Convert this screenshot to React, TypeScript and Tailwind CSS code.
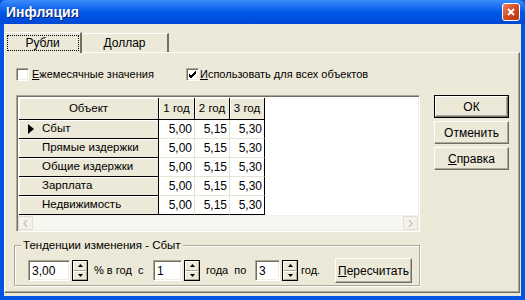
import React from 'react';

const raised =
  'bg-[#ece9d8] border border-t-white border-l-white border-r-[#716f64] border-b-[#716f64] shadow-[inset_-1px_-1px_0_#aca899]';
const sunken =
  'border border-t-[#aca899] border-l-[#aca899] border-r-white border-b-white shadow-[inset_1px_1px_0_#716f64,inset_-1px_-1px_0_#f1efe2]';

const rows = ['Сбыт', 'Прямые издержки', 'Общие издержки', 'Зарплата', 'Недвижимость'];
const values = ['5,00', '5,15', '5,30'];

const Check: React.FC<{ checked?: boolean }> = ({ checked }) => (
  <div className={`w-[13px] h-[13px] bg-white ${sunken} flex items-center justify-center`}>
    {checked && (
      <svg width="9" height="9" viewBox="0 0 9 9">
        <path d="M1 4 L3 6 L8 1 M1 5 L3 7 L8 2 M1 6 L3 8 L8 3" stroke="#000" strokeWidth="1" fill="none" />
      </svg>
    )}
  </div>
);

const Spin: React.FC = () => (
  <div className="w-[16px] h-[21px] border border-black flex flex-col bg-[#ece9d8]">
    <div className="flex-1 flex items-center justify-center border border-t-white border-l-white border-r-[#aca899] border-b-[#aca899]">
      <svg width="5" height="3" viewBox="0 0 5 3"><path d="M2.5 0 L5 3 L0 3 Z" fill="#000" /></svg>
    </div>
    <div className="flex-1 flex items-center justify-center border border-t-white border-l-white border-r-[#aca899] border-b-[#aca899]">
      <svg width="5" height="3" viewBox="0 0 5 3"><path d="M0 0 L5 0 L2.5 3 Z" fill="#000" /></svg>
    </div>
  </div>
);

const Edit: React.FC<{ value: string; w: string }> = ({ value, w }) => (
  <div className={`${w} h-[21px] bg-white ${sunken} flex items-center pl-[3px] text-[12px] leading-none`}>{value}</div>
);

const Btn: React.FC<{ children: React.ReactNode; def?: boolean; w?: string; h?: string }> = ({ children, def, w = 'w-[75px]', h = 'h-[23px]' }) =>
  def ? (
    <div className={`${w} ${h} border border-black flex`}>
      <div className={`flex-1 ${raised} flex items-center justify-center`}>{children}</div>
    </div>
  ) : (
    <div className={`${w} ${h} ${raised} flex items-center justify-center`}>{children}</div>
  );

export default function App() {
  return (
    <div className="w-[525px] h-[300px] flex flex-col font-['Liberation_Sans',Arial,sans-serif] text-[11px] text-black bg-[#0054e3] select-none">
      {/* title bar */}
      <div className="h-[24px] shrink-0 flex items-center justify-between pl-[6px] pr-[5px] rounded-t-[6px] bg-gradient-to-b from-[#3b8cf8] via-[#0058e8] to-[#0048d6]">
        <span className="text-white font-bold text-[14px] [text-shadow:1px_1px_0_#0a1e6e]">Инфляция</span>
        <div className="w-[18px] h-[18px] rounded-[3px] border border-white bg-gradient-to-br from-[#e9825f] via-[#d54a22] to-[#b8360f] flex items-center justify-center">
          <svg width="10" height="10" viewBox="0 0 10 10">
            <path d="M2 2 L8 8 M8 2 L2 8" stroke="#fff" strokeWidth="2" />
          </svg>
        </div>
      </div>

      <div className="flex-1 flex flex-col border-x-4 border-b-4 border-[#0054e3] bg-[#ece9d8]">
        {/* tabs */}
        <div className="mt-[7px] h-[21px] flex items-end">
          <div className="relative z-10 w-[78px] h-[21px] -mb-[1px] bg-[#ece9d8] border-t border-l border-white border-r-2 border-r-[#716f64] flex items-center justify-center pb-[1px]">
            <span className="absolute left-[2px] right-[1px] top-[2px] bottom-[2px] border border-dotted border-black" />
            <span className="text-[12px]">Рубли</span>
          </div>
          <div className="w-[87px] h-[19px] bg-[#ece9d8] border-t border-white border-r-2 border-r-[#716f64] flex items-center justify-center">
            <span className="text-[12px]">Доллар</span>
          </div>
        </div>

        {/* tab panel */}
        <div className="w-[516px] h-[241px] border border-t-white border-l-white border-r-[#716f64] border-b-[#716f64] shadow-[inset_-1px_-1px_0_#aca899] flex flex-col pl-[11px] pt-[15px]">
          <div className="h-[13px] flex items-center">
            <div className="w-[170px] flex items-center gap-[3px]">
              <Check />
              <span><span className="underline">Е</span>жемесячные значения</span>
            </div>
            <div className="flex items-center gap-[1px]">
              <Check checked />
              <span><span className="underline">И</span>спользовать для всех объектов</span>
            </div>
          </div>

          <div className="mt-[14px] flex">
            {/* grid */}
            <div className={`w-[404px] h-[137px] bg-white ${sunken} p-[1px] flex flex-col`}>
              <div className="flex-1 flex flex-col overflow-hidden pl-[1px] pt-[1px]">
                <div className="flex h-[23px] text-[11.5px]">
                  <div className="w-[140px] bg-[#ece9d8] border-r border-b border-black shadow-[inset_1px_1px_0_#fff] flex items-center justify-center">Объект</div>
                  {['1 год', '2 год', '3 год'].map((h, i) => (
                    <div key={h} className={`${i === 0 ? 'w-[36px]' : 'w-[35px]'} bg-[#ece9d8] border-r border-b border-black shadow-[inset_1px_1px_0_#fff] flex items-center justify-center`}>{h}</div>
                  ))}
                </div>
                {rows.map((r, ri) => (
                  <div key={r} className="flex h-[19px]">
                    <div className="w-[140px] bg-[#ece9d8] border-r border-b border-black shadow-[inset_1px_1px_0_#fff] flex items-center pl-[9px]">
                      <span className="w-[14px] flex items-center">
                        {ri === 0 && (
                          <svg width="6" height="10" viewBox="0 0 6 10"><path d="M0 0 L6 5 L0 10 Z" fill="#000" /></svg>
                        )}
                      </span>
                      <span className="text-[11.5px]">{r}</span>
                    </div>
                    {values.map((v, i) => (
                      <div
                        key={i}
                        className={`${i === 0 ? 'w-[36px]' : 'w-[35px]'} bg-white border-r border-b ${i === 2 ? 'border-r-black' : 'border-r-[#e6e3d3]'} ${ri === 4 ? 'border-b-black' : 'border-b-[#e6e3d3]'} flex items-center justify-end pr-[2px] text-[12px]`}
                      >
                        {v}
                      </div>
                    ))}
                  </div>
                ))}
              </div>
              {/* horizontal scrollbar */}
              <div className="h-[15px] flex bg-[#f7f6f1] border-t border-[#f0efe8]">
                <div className="w-[15px] h-full border border-[#e1dfd4] bg-[#f3f2ec] flex items-center justify-center">
                  <svg width="5" height="7" viewBox="0 0 5 7"><path d="M4 0 L1 3.5 L4 7" stroke="#c9c7bb" strokeWidth="1.5" fill="none" /></svg>
                </div>
                <div className="flex-1" />
                <div className="w-[15px] h-full border border-[#e1dfd4] bg-[#f3f2ec] flex items-center justify-center">
                  <svg width="5" height="7" viewBox="0 0 5 7"><path d="M1 0 L4 3.5 L1 7" stroke="#c9c7bb" strokeWidth="1.5" fill="none" /></svg>
                </div>
              </div>
            </div>

            {/* buttons */}
            <div className="ml-[14px] flex flex-col gap-[3px] text-[12px]">
              <Btn def>ОК</Btn>
              <Btn>Отменить</Btn>
              <Btn><span><span className="underline">С</span>правка</span></Btn>
            </div>
          </div>

          {/* group box */}
          <div className="relative mt-[13px] -ml-[2px] w-[406px] h-[41px] border border-[#aca899] shadow-[inset_1px_1px_0_#fff,1px_1px_0_#fff] pl-[13px] pt-[12px]">
            <span className="absolute -top-[8px] left-[6px] px-[2px] bg-[#ece9d8] text-[11.5px] leading-[14px]">Тенденции изменения - Сбыт</span>
            <div className="flex items-center text-[11px]">
              <Edit value="3,00" w="w-[42px]" />
              <div className="ml-[2px]"><Spin /></div>
              <span className="ml-[6px] w-[59px] whitespace-pre">% в год  с</span>
              <Edit value="1" w="w-[29px]" />
              <div className="ml-[2px]"><Spin /></div>
              <span className="ml-[6px] w-[49px] whitespace-pre">года  по</span>
              <Edit value="3" w="w-[25px]" />
              <div className="ml-[2px]"><Spin /></div>
              <span className="ml-[3px] w-[34px]">год.</span>
              <Btn w="w-[77px]" h="h-[25px]"><span className="text-[12px]"><span className="underline">П</span>ересчитать</span></Btn>
            </div>
          </div>
        </div>
      </div>
    </div>
  );
}
